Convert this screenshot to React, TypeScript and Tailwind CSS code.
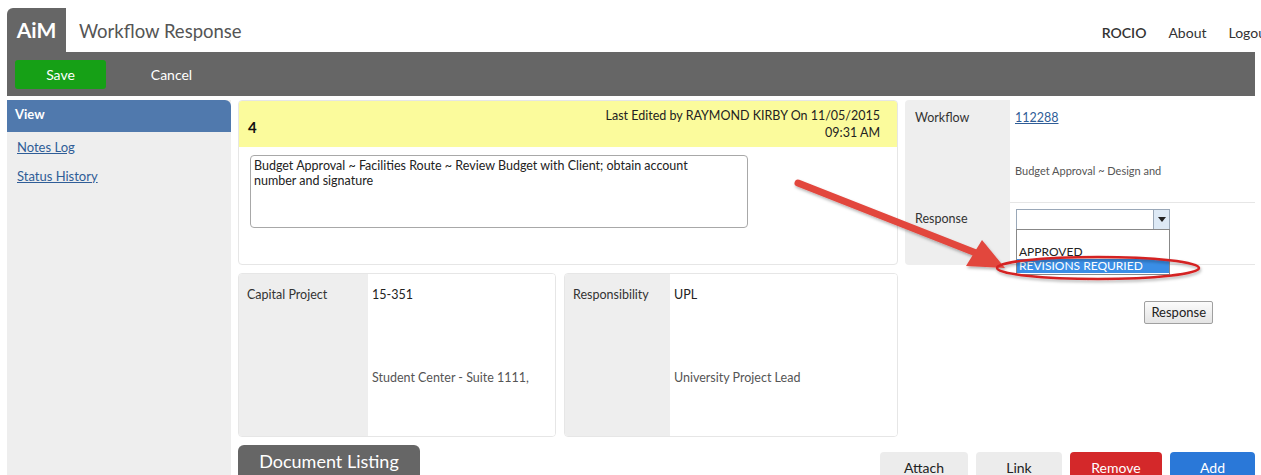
import React from 'react';

const font = { fontFamily: 'Lato, "Open Sans", sans-serif' };

const InfoCard = ({ label, code, desc, labelW, width }: { label: string; code: string; desc: string; labelW: string; width: string }) => (
  <div className={`${width} h-[164px] flex rounded-[4px] border border-[#e6e6e6] overflow-hidden`}>
    <div className={`${labelW} bg-[#eeeeee] pl-[8px] pt-[12px] text-[12.5px] text-[#333]`}>{label}</div>
    <div className="flex-1 bg-white pl-[4px] pt-[12px] text-[12.5px]">
      <div className="text-[#222]">{code}</div>
      <div className="mt-[64px] text-[#555]">{desc}</div>
    </div>
  </div>
);

const App = () => {
  return (
    <div className="relative w-[1261px] h-[475px] overflow-hidden bg-white" style={font}>
      {/* Header */}
      <div className="h-[52px] flex items-end pl-[7px] pr-[6px]">
        <div className="w-[59px] h-[44px] bg-[#666666] rounded-tl-[6px] flex items-center justify-center text-white text-[21px] font-bold">
          AiM
        </div>
        <div className="ml-[13px] self-center mt-[12px] text-[18.5px] text-[#555]">Workflow Response</div>
        <div className="ml-auto self-center mt-[12px] flex items-center gap-[22px] text-[14px] text-[#333] -mr-[16px]">
          <span className="font-semibold">ROCIO</span>
          <span>About</span>
          <span>Logout</span>
        </div>
      </div>

      {/* Toolbar */}
      <div className="mx-[7px] mr-[6px] h-[44px] bg-[#666666] flex items-center pl-[8px]">
        <button className="w-[91px] h-[29px] bg-[#16a016] rounded-[3px] text-white text-[14px]">Save</button>
        <button className="w-[91px] h-[29px] ml-[20px] text-white text-[14px]">Cancel</button>
      </div>

      <div className="flex pl-[7px] pt-[4px]">
        {/* Sidebar */}
        <div className="w-[224px] h-[400px] bg-[#eeeeee] shrink-0">
          <div className="h-[32px] bg-[#5079ad] rounded-tr-[6px] pl-[8px] pt-[5px] text-white text-[13px] font-bold">View</div>
          <div className="pl-[10px] pt-[6px] flex flex-col gap-[9px] text-[13px] text-[#2f5d97] underline">
            <span>Notes Log</span>
            <span>Status History</span>
          </div>
        </div>

        <div className="ml-[7px] w-[1017px] flex flex-col">
          <div className="flex gap-[7px]">
            {/* Step card */}
            <div className="w-[660px] h-[165px] bg-white border border-[#e6e6e6] rounded-[4px] overflow-hidden">
              <div className="h-[46px] bg-[#fbfb9c] flex justify-between pl-[9px] pr-[17px]">
                <span className="mt-[15px] text-[15px] font-bold text-[#111]">4</span>
                <div className="pt-[6px] text-right text-[12.5px] leading-[17px] text-[#222]">
                  <div>Last Edited by RAYMOND KIRBY On 11/05/2015</div>
                  <div>09:31 AM</div>
                </div>
              </div>
              <div className="ml-[11px] mt-[8px] w-[498px] h-[73px] border border-[#a8a8a8] rounded-[4px] pl-[3px] pr-[48px] pt-[2px] text-[12.5px] leading-[15px] text-[#222]">
                Budget Approval ~ Facilities Route ~ Review Budget with Client; obtain account number and signature
              </div>
            </div>

            {/* Workflow panel */}
            <div className="relative w-[350px] h-[165px] flex">
              <div className="w-[105px] bg-[#eeeeee] rounded-l-[4px] text-[12.5px] text-[#333] pl-[10px]">
                <div className="h-[103px] pt-[9px]">Workflow</div>
                <div className="pt-[7px]">Response</div>
              </div>
              <div className="flex-1 bg-white border-b border-[#e6e6e6]">
                <div className="h-[103px] border-b border-[#e6e6e6] pl-[5px] pt-[9px]">
                  <div className="text-[12.5px] text-[#2f5d97] underline">112288</div>
                  <div className="mt-[35px] text-[11px] text-[#555]">Budget Approval ~ Design and</div>
                </div>
                <div className="pl-[6px] pt-[6px]">
                  <div className="relative w-[154px] h-[21px] border border-[#9aa8b8] bg-white flex justify-end">
                    <div className="w-[16px] h-[19px] bg-[#dde9f5] border-l border-[#9aa8b8] flex items-center justify-center">
                      <svg width="8" height="5" viewBox="0 0 8 5"><path d="M0 0h8L4 5z" fill="#222" /></svg>
                    </div>
                    <div className="absolute left-[-1px] top-[19px] w-[154px] h-[46px] bg-white border border-[#888] text-[12px] uppercase z-10">
                      <div className="h-[15px]" />
                      <div className="pl-[2px] leading-[14px] text-[#222]">Approved</div>
                      <div className="pl-[2px] leading-[14px] bg-[#3a8ee6] text-white">Revisions Requried</div>
                    </div>
                  </div>
                </div>
              </div>
            </div>
          </div>

          <div className="flex mt-[8px]">
            <InfoCard label="Capital Project" code="15-351" desc="Student Center - Suite 1111," labelW="w-[129px]" width="w-[318px]" />
            <div className="ml-[8px]">
              <InfoCard label="Responsibility" code="UPL" desc="University Project Lead" labelW="w-[105px]" width="w-[334px]" />
            </div>
            <div className="ml-[7px] w-[350px] flex justify-end pr-[42px] pt-[28px]">
              <button className="h-[23px] px-[6px] border border-[#a0a0a0] rounded-[2px] bg-gradient-to-b from-[#fbfbfb] to-[#e4e4e4] text-[13px] text-[#222]">
                Response
              </button>
            </div>
          </div>

          <div className="flex mt-[8px]">
            <div className="w-[182px] h-[32px] bg-[#666666] rounded-t-[6px] flex items-center justify-center text-white text-[18px]">
              Document Listing
            </div>
            <div className="ml-auto flex gap-[8px] mt-[7px] text-[14px]">
              <button className="w-[88px] h-[30px] bg-[#ececec] rounded-t-[4px] text-[#222]">Attach</button>
              <button className="w-[86px] h-[30px] bg-[#ececec] rounded-t-[4px] text-[#222]">Link</button>
              <button className="w-[92px] h-[30px] bg-[#d4282a] rounded-t-[4px] text-white">Remove</button>
              <button className="w-[85px] h-[30px] bg-[#2a78d8] rounded-t-[4px] text-white">Add</button>
            </div>
          </div>
        </div>
      </div>

      {/* Callout: arrow and ring around the chosen option */}
      <svg className="absolute left-0 top-0 pointer-events-none z-20" width="1261" height="475">
        <defs>
          <filter id="soft" x="-10%" y="-10%" width="120%" height="120%">
            <feDropShadow dx="1" dy="2" stdDeviation="1.5" floodColor="#000" floodOpacity="0.3" />
          </filter>
        </defs>
        <g filter="url(#soft)">
          <line x1="798" y1="183" x2="976" y2="253" stroke="#e2463e" strokeWidth="7" strokeLinecap="round" />
          <path d="M1005 268 L966 266 L982 240 Z" fill="#e2463e" />
          <ellipse cx="1098" cy="268" rx="101" ry="11" fill="none" stroke="#d42424" strokeWidth="2.5" />
        </g>
      </svg>
    </div>
  );
};

export default App;
